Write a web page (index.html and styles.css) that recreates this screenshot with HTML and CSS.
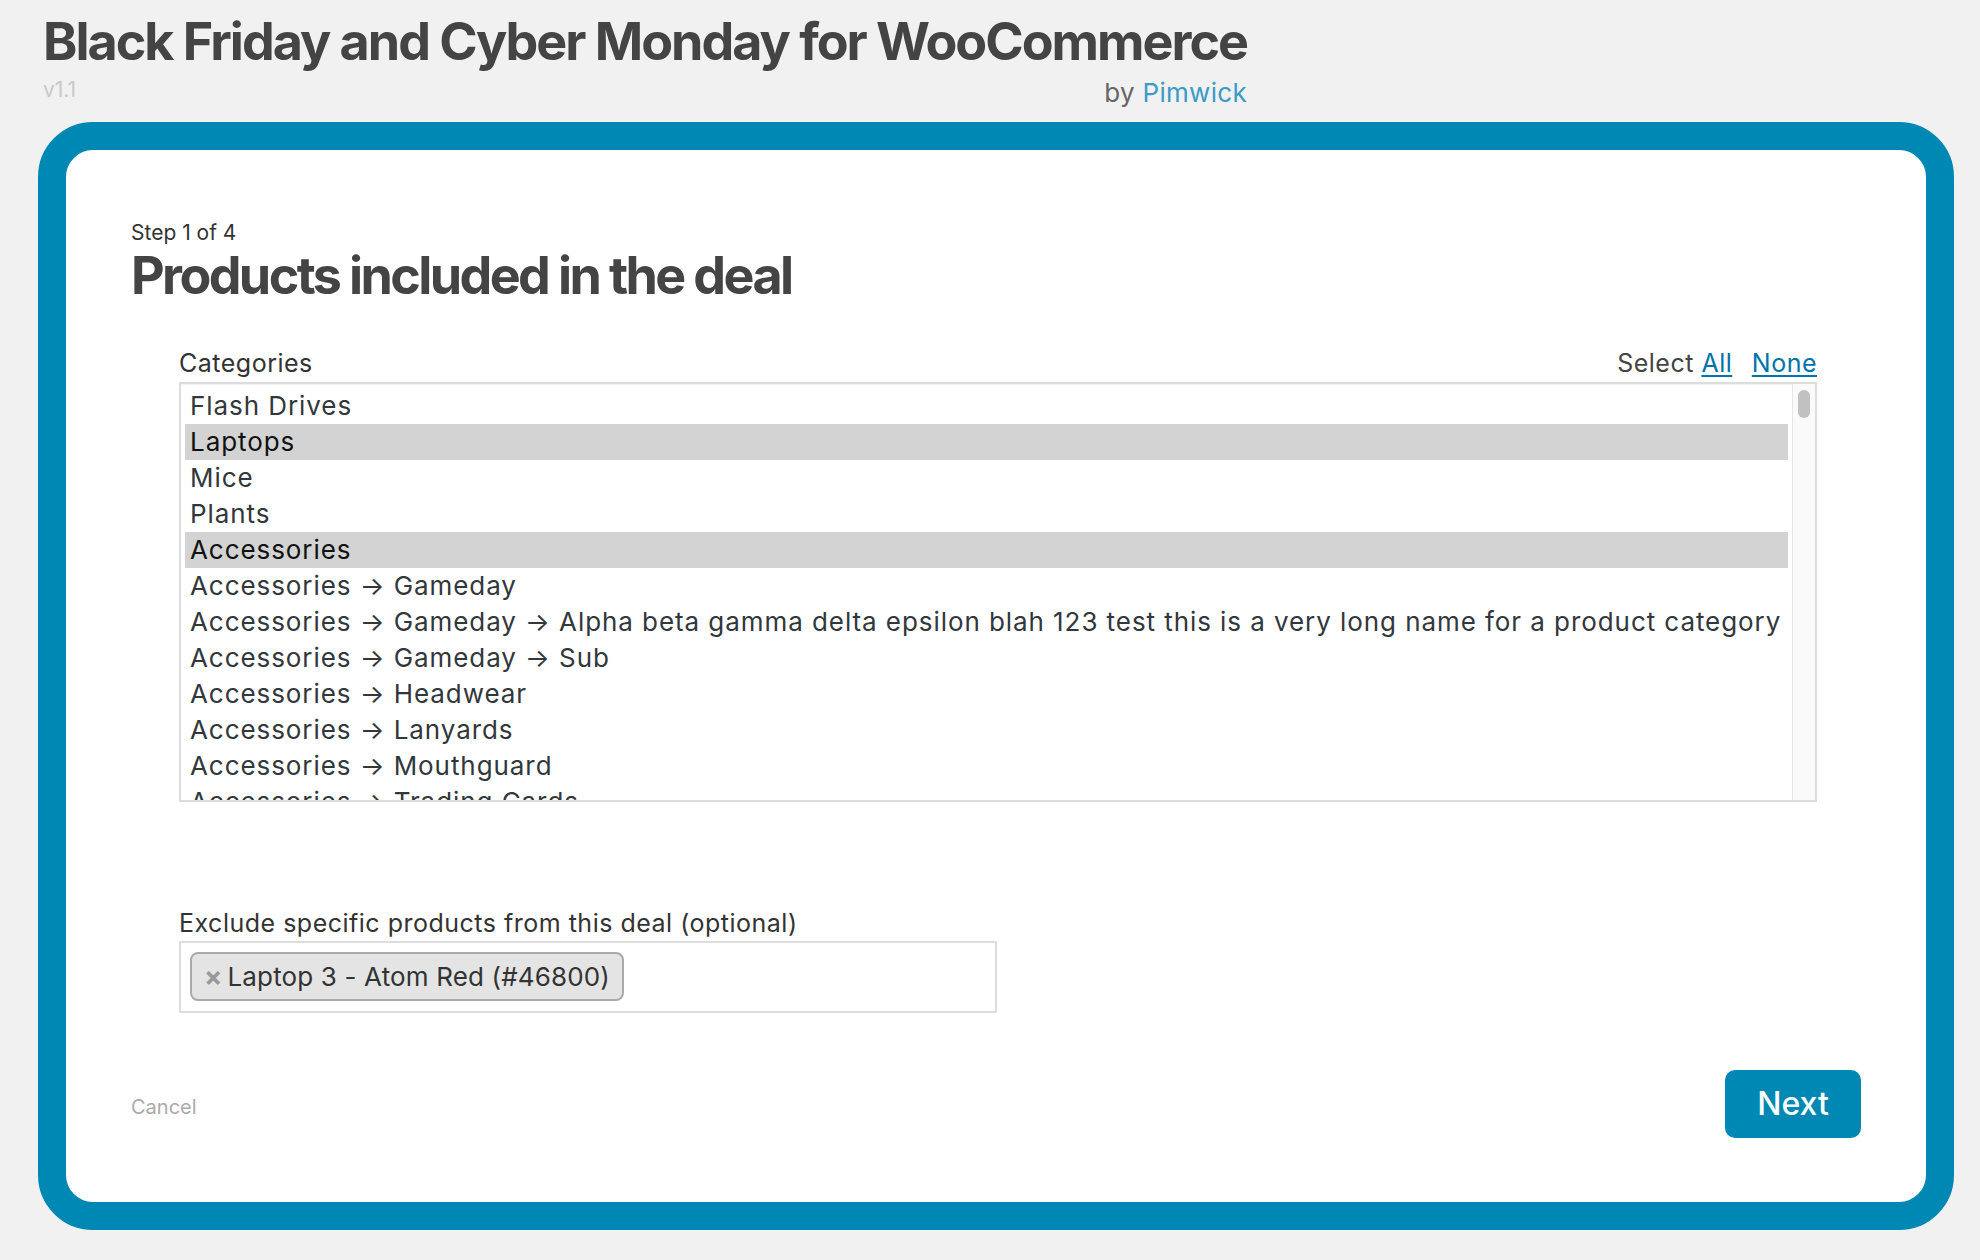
FILE: index.html
```html
<!DOCTYPE html>
<html lang="en">
<head>
<meta charset="utf-8">
<title>Black Friday and Cyber Monday for WooCommerce</title>
<link rel="stylesheet" href="styles.css">
</head>
<body>
<header class="masthead">
  <h1 class="app-title">Black Friday and Cyber Monday for WooCommerce</h1>
  <div class="meta-row">
    <span class="version">v1.1</span>
    <span class="byline">by <a class="author" href="#">Pimwick</a></span>
  </div>
</header>

<main class="wizard">
  <div class="step-label">Step 1 of 4</div>
  <h2 class="step-title">Products included in the deal</h2>

  <section class="field">
    <div class="field-head">
      <span class="field-label">Categories</span>
      <span class="select-links">Select <a href="#">All</a> <a class="none-link" href="#">None</a></span>
    </div>
    <div class="listbox">
      <div class="list-items">
        <div class="list-row">Flash Drives</div>
        <div class="list-row selected">Laptops</div>
        <div class="list-row">Mice</div>
        <div class="list-row">Plants</div>
        <div class="list-row selected">Accessories</div>
        <div class="list-row">Accessories → Gameday</div>
        <div class="list-row">Accessories → Gameday → Alpha beta gamma delta epsilon blah 123 test this is a very long name for a product category</div>
        <div class="list-row">Accessories → Gameday → Sub</div>
        <div class="list-row">Accessories → Headwear</div>
        <div class="list-row">Accessories → Lanyards</div>
        <div class="list-row">Accessories → Mouthguard</div>
        <div class="list-row">Accessories → Trading Cards</div>
      </div>
      <div class="scroll-track"><div class="scroll-thumb"></div></div>
    </div>
  </section>

  <section class="field field-exclude">
    <div class="field-head">
      <span class="field-label">Exclude specific products from this deal (optional)</span>
    </div>
    <div class="tag-input">
      <span class="tag"><span class="tag-remove">×</span>Laptop 3 - Atom Red (#46800)</span>
    </div>
  </section>

  <div class="wizard-footer">
    <a class="cancel" href="#">Cancel</a>
    <button class="next-btn" type="button">Next</button>
  </div>
</main>
</body>
</html>
```

FILE: styles.css
```css
* {
  box-sizing: border-box;
}

html, body {
  margin: 0;
  padding: 0;
}

body {
  background: #f1f1f1;
  font-family: Inter, "Noto Sans", "Liberation Sans", sans-serif;
  color: #333;
  width: 1980px;
  height: 1260px;
  overflow: hidden;
}

a {
  text-decoration: none;
}

/* ---------- header ---------- */
.masthead {
  display: inline-flex;
  flex-direction: column;
  padding: 11px 0 0 43px;
}

.app-title {
  margin: 0;
  font-size: 52px;
  line-height: 62px;
  font-weight: 700;
  color: #444;
  letter-spacing: -2px;
  white-space: nowrap;
}

.meta-row {
  display: flex;
  justify-content: space-between;
  align-items: flex-start;
  margin-top: 4px;
}

.version {
  font-size: 21px;
  line-height: 24px;
  padding-top: 1px;
  color: #c8c8c8;
}

.byline {
  font-size: 26px;
  line-height: 32px;
  color: #666;
  letter-spacing: 0.3px;
}

.author {
  color: #3a9bc7;
}

/* ---------- wizard card ---------- */
.wizard {
  margin: 13px 26px 0 38px;
  border: 28px solid #0088b5;
  border-radius: 55px;
  background: #fff;
  padding: 70px 65px 64px 65px;
}

.step-label {
  font-size: 21px;
  line-height: 25px;
  color: #333;
}

.step-title {
  margin: 0;
  font-size: 52px;
  line-height: 62px;
  font-weight: 700;
  color: #444;
  letter-spacing: -2.6px;
}

.field {
  margin: 41px 44px 0 48px;
}

.field-exclude {
  margin-top: 106px;
}

.field-head {
  display: flex;
  justify-content: space-between;
  align-items: baseline;
  font-size: 25px;
  line-height: 30px;
  color: #333;
  letter-spacing: 0.5px;
}

.select-links {
  color: #444;
}

.select-links a {
  color: #0073aa;
  text-decoration: underline;
  text-decoration-thickness: 2px;
  text-underline-offset: 3px;
}

.select-links .none-link {
  margin-left: 12px;
}

/* ---------- listbox ---------- */
.listbox {
  margin-top: 4px;
  height: 420px;
  border: 2px solid #ddd;
  box-shadow: inset 0 1px 2px rgba(0, 0, 0, 0.07);
  display: flex;
  overflow: hidden;
}

.list-items {
  flex: 1;
  min-width: 0;
  padding: 4px 4px 0 4px;
  overflow: hidden;
}

.list-row {
  font-size: 26px;
  line-height: 36px;
  height: 36px;
  padding-left: 5px;
  white-space: nowrap;
  color: #32373c;
  letter-spacing: 0.93px;
}

.list-row.selected {
  background: #d3d3d3;
  color: #111;
}

.scroll-track {
  width: 23px;
  flex: none;
  background: #fafafa;
  border-left: 1px solid #e6e6e6;
  padding: 6px 0 0 5px;
}

.scroll-thumb {
  width: 12px;
  height: 28px;
  border-radius: 6px;
  background: #c1c1c1;
}

/* ---------- tag input ---------- */
.tag-input {
  margin-top: 3px;
  width: 818px;
  height: 72px;
  border: 2px solid #ddd;
  padding: 9px 9px;
  display: flex;
  align-items: flex-start;
}

.tag {
  display: inline-flex;
  align-items: baseline;
  height: 49px;
  padding: 0 12px 0 12px;
  border: 2px solid #aaa;
  border-radius: 8px;
  background: #e4e4e4;
  font-size: 26px;
  line-height: 45px;
  color: #333;
  white-space: nowrap;
  letter-spacing: 0.15px;
}

.tag-remove {
  color: #999;
  font-weight: 700;
  font-size: 27px;
  margin-right: 5px;
}

/* ---------- footer ---------- */
.wizard-footer {
  margin-top: 57px;
  display: flex;
  justify-content: space-between;
  align-items: center;
}

.cancel {
  font-size: 20px;
  line-height: 24px;
  padding-top: 6px;
  color: #aaa;
}

.next-btn {
  width: 136px;
  height: 68px;
  border: 0;
  border-radius: 10px;
  background: #0088b5;
  color: #fff;
  font-family: Inter, "Noto Sans", "Liberation Sans", sans-serif;
  font-size: 32px;
  font-weight: 500;
  line-height: 68px;
  padding: 0;
  cursor: pointer;
}
```
